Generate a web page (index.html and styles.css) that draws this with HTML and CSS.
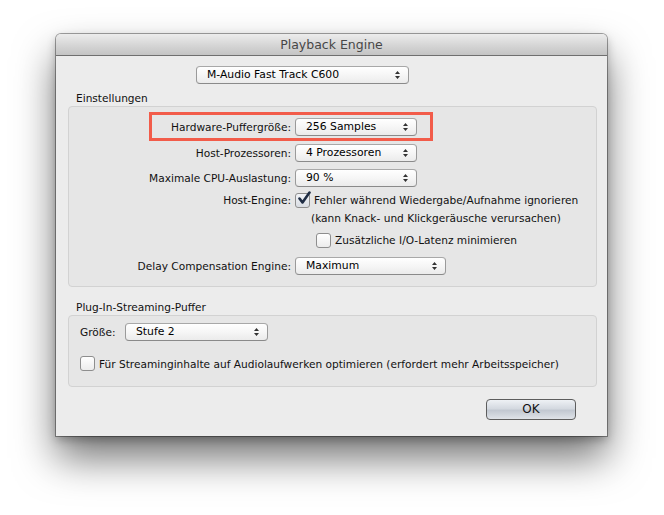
FILE: index.html
```html
<!DOCTYPE html>
<html>
<head>
<meta charset="utf-8">
<link rel="stylesheet" href="styles.css">
</head>
<body>
<div class="window">
  <div class="titlebar">Playback Engine</div>
  <div class="content">
    <div class="device-row">
      <div class="select select-device"><span>M-Audio Fast Track C600</span><svg class="arrows" width="7" height="10" viewBox="0 0 7 10"><path d="M3.5 1 L6 4 H1 Z M3.5 9 L6 6 H1 Z" fill="#333"/></svg></div>
    </div>
    <div class="group-label">Einstellungen</div>
    <div class="group group-settings">
      <div class="highlight"></div>
      <div class="row row1">
        <div class="label">Hardware-Puffergröße:</div>
        <div class="select select-mid"><span>256 Samples</span><svg class="arrows" width="7" height="10" viewBox="0 0 7 10"><path d="M3.5 1 L6 4 H1 Z M3.5 9 L6 6 H1 Z" fill="#333"/></svg></div>
      </div>
      <div class="row row2">
        <div class="label">Host-Prozessoren:</div>
        <div class="select select-mid"><span>4 Prozessoren</span><svg class="arrows" width="7" height="10" viewBox="0 0 7 10"><path d="M3.5 1 L6 4 H1 Z M3.5 9 L6 6 H1 Z" fill="#333"/></svg></div>
      </div>
      <div class="row row3">
        <div class="label">Maximale CPU-Auslastung:</div>
        <div class="select select-mid"><span>90 %</span><svg class="arrows" width="7" height="10" viewBox="0 0 7 10"><path d="M3.5 1 L6 4 H1 Z M3.5 9 L6 6 H1 Z" fill="#333"/></svg></div>
      </div>
      <div class="row row4">
        <div class="label">Host-Engine:</div>
        <div class="check-line">
          <span class="checkbox checked"><svg width="16" height="16" viewBox="0 0 16 16"><path d="M3.5 7.5 L6.5 11.5 L13.5 1.5" fill="none" stroke="#1f2d44" stroke-width="2.6" stroke-linecap="round" stroke-linejoin="round"/></svg></span>
          <span class="check-text">Fehler während Wiedergabe/Aufnahme ignorieren</span>
        </div>
      </div>
      <div class="row row5">
        <div class="label"></div>
        <div class="note">(kann Knack- und Klickgeräusche verursachen)</div>
      </div>
      <div class="row row6">
        <div class="label"></div>
        <div class="check-line indent">
          <span class="checkbox"></span>
          <span class="check-text">Zusätzliche I/O-Latenz minimieren</span>
        </div>
      </div>
      <div class="row row7">
        <div class="label">Delay Compensation Engine:</div>
        <div class="select select-wide"><span>Maximum</span><svg class="arrows" width="7" height="10" viewBox="0 0 7 10"><path d="M3.5 1 L6 4 H1 Z M3.5 9 L6 6 H1 Z" fill="#333"/></svg></div>
      </div>
    </div>
    <div class="group-label label2">Plug-In-Streaming-Puffer</div>
    <div class="group group-stream">
      <div class="size-row">
        <span class="size-label">Größe:</span>
        <div class="select select-stufe"><span>Stufe 2</span><svg class="arrows" width="7" height="10" viewBox="0 0 7 10"><path d="M3.5 1 L6 4 H1 Z M3.5 9 L6 6 H1 Z" fill="#333"/></svg></div>
      </div>
      <div class="check-line stream-check">
        <span class="checkbox"></span>
        <span class="check-text">Für Streaminginhalte auf Audiolaufwerken optimieren (erfordert mehr Arbeitsspeicher)</span>
      </div>
    </div>
    <div class="footer">
      <div class="button">OK</div>
    </div>
  </div>
</div>
</body>
</html>
```
FILE: styles.css
```css
html, body {
  margin: 0;
  padding: 0;
  background: #ffffff;
}
body {
  width: 664px;
  height: 515px;
  overflow: hidden;
  font-family: "DejaVu Sans", "Liberation Sans", sans-serif;
  font-size: 10.6px;
  color: #111;
}
.window {
  margin: 34px 0 0 56px;
  width: 551px;
  height: 402px;
  background: #ececec;
  border-radius: 5px 5px 0 0;
  box-shadow: 0 0 0 1px rgba(0,0,0,0.35), 0 22px 40px rgba(0,0,0,0.55), 0 4px 10px rgba(0,0,0,0.25);
  display: flex;
  flex-direction: column;
}
.titlebar {
  height: 21px;
  border-bottom: 1px solid #6f6f6f;
  border-radius: 5px 5px 0 0;
  background: linear-gradient(#ececec, #d3d3d3 60%, #c4c4c4);
  text-align: center;
  line-height: 22px;
  font-size: 12.5px;
  color: #474747;
}
.content {
  flex: 1;
  display: flex;
  flex-direction: column;
}
.device-row {
  margin-top: 10px;
  padding-left: 140px;
  display: flex;
}
.select {
  height: 16px;
  border: 1px solid #9a9a9a;
  border-top-color: #a8a8a8;
  border-bottom-color: #8a8a8a;
  border-radius: 4px;
  background: linear-gradient(#ffffff, #f6f6f6 50%, #ebebeb);
  display: flex;
  align-items: center;
  justify-content: space-between;
  padding: 0 7px 0 10px;
  box-sizing: content-box;
  font-size: 10.8px;
  line-height: 16px;
  color: #000;
}
.select .arrows {
  flex: none;
}
.select-device { width: 194px; }
.select-mid { width: 103px; }
.select-wide { width: 132px; }
.select-stufe { width: 124px; }
.group-label {
  margin-top: 7px;
  margin-left: 20px;
  height: 14px;
  line-height: 14px;
}
.group {
  margin-left: 12px;
  margin-right: 10px;
  margin-top: 1px;
  background: #e6e6e6;
  border: 1px solid #d2d2d2;
  border-radius: 4px;
  position: relative;
}
.group-settings {
  height: 181px;
  padding-top: 11px;
  box-sizing: border-box;
}
.highlight {
  position: absolute;
  left: 80px;
  top: 5px;
  width: 278px;
  height: 23px;
  border: 3px solid #f25c4a;
  pointer-events: none;
}
.row {
  display: flex;
  align-items: center;
  height: 18px;
}
.row .label {
  width: 226px;
  flex: none;
  text-align: right;
  padding-right: 4px;
  box-sizing: border-box;
  white-space: nowrap;
}
.row2 { margin-top: 8px; }
.row3 { margin-top: 7px; }
.row4 { margin-top: 4px; }
.row5 { margin-top: 0px; }
.row6 { margin-top: 4px; }
.row7 { margin-top: 8px; }
.check-line {
  display: flex;
  align-items: center;
  gap: 4px;
  white-space: nowrap;
}
.check-line.indent { padding-left: 21px; }
.note { padding-left: 16px; white-space: nowrap; }
.checkbox {
  width: 13px;
  height: 13px;
  border: 1px solid #8e8e8e;
  border-radius: 3px;
  background: linear-gradient(#ffffff, #ececec);
  position: relative;
  flex: none;
}
.checkbox svg {
  position: absolute;
  left: 0;
  top: -3px;
}
.checkbox.checked {
  background: linear-gradient(#f2f4f7, #d9dde3);
}
.label2 { margin-top: 13px; }
.group-stream {
  height: 72px;
  box-sizing: border-box;
  padding: 7px 0 0 11px;
}
.size-row {
  display: flex;
  align-items: center;
  height: 18px;
}
.size-label { width: 45px; }
.stream-check { margin-top: 15px; }
.footer {
  display: flex;
  justify-content: flex-end;
  padding-right: 31px;
  margin-top: 12px;
}
.button {
  width: 88px;
  height: 19px;
  border: 1px solid #5d5d5d;
  border-radius: 4px;
  background: linear-gradient(#eef1f5, #d4d9e0 45%, #c2c8d1 55%, #dfe3e8);
  text-align: center;
  line-height: 19px;
  font-size: 12px;
  color: #111;
}
```
